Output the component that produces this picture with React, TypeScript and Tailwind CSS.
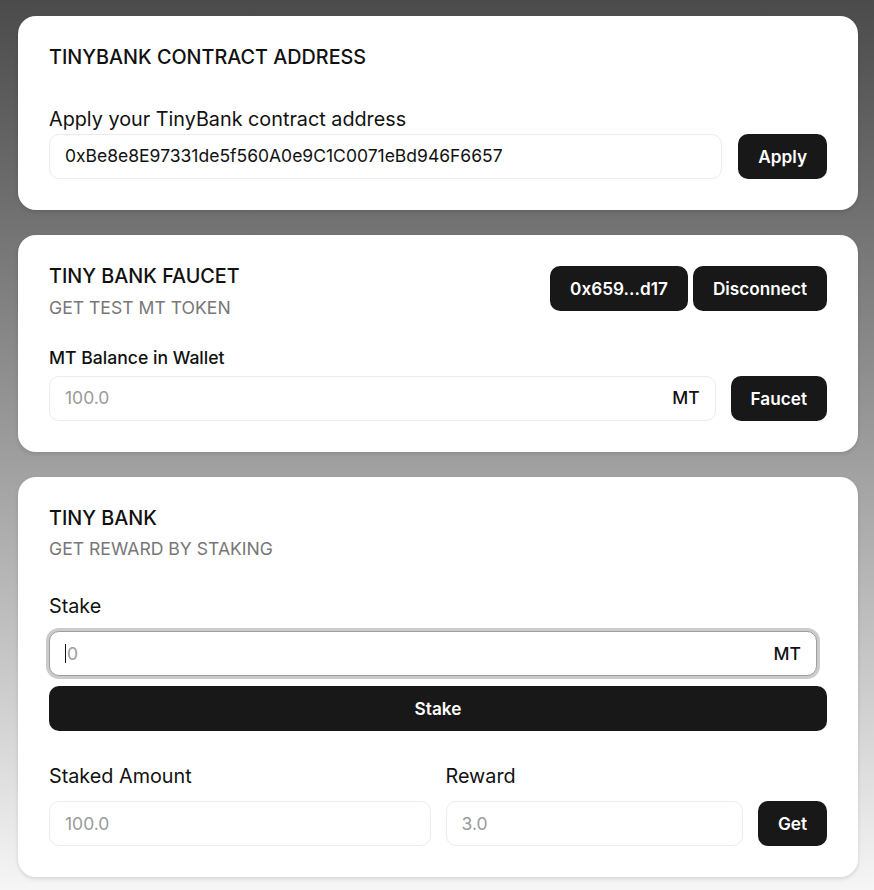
import React from "react";

function Btn({ children, className = "" }: { children: React.ReactNode; className?: string }) {
  return (
    <div
      className={
        "flex h-[45px] items-center justify-center rounded-[10px] bg-[#181818] px-5 pt-px text-[17.2px] font-semibold text-white " +
        className
      }
    >
      {children}
    </div>
  );
}

function Field({
  value,
  placeholder,
  suffix,
  className = "",
}: {
  value?: string;
  placeholder?: string;
  suffix?: string;
  className?: string;
}) {
  return (
    <div
      className={
        "flex h-[45px] items-center rounded-[10px] border border-[#ececec] bg-white px-[15px] text-[17.5px] " +
        className
      }
    >
      <span className={"flex-1 " + (value ? "text-[#111]" : "text-[#9a9a9a]")}>{value ?? placeholder}</span>
      {suffix && <span className="font-medium text-[#111]">{suffix}</span>}
    </div>
  );
}

const card = "rounded-[18px] bg-white px-[31px] pt-[32px] pb-[31px] shadow-[0_2px_4px_rgba(0,0,0,0.12)]";

export default function App() {
  return (
    <div
      className="flex min-h-[890px] flex-col gap-[25px] bg-gradient-to-b from-[#4b4b4b] to-[#f6f6f6] pt-4 pr-[16px] pb-3 pl-[18px]"
      style={{ fontFamily: "Inter, 'Noto Sans', sans-serif" }}
    >
      {/* Card 1 */}
      <div className={card}>
        <div className="text-[19.8px] leading-none font-medium text-[#111]">TINYBANK CONTRACT ADDRESS</div>
        <div className="mt-[37px] text-[19.8px] leading-7 text-[#111]">Apply your TinyBank contract address</div>
        <div className="mt-px flex gap-4">
          <Field value="0xBe8e8E97331de5f560A0e9C1C0071eBd946F6657" className="flex-1" />
          <Btn>Apply</Btn>
        </div>
      </div>

      {/* Card 2 */}
      <div className={card}>
        <div className="flex items-start justify-between">
          <div>
            <div className="text-[19.8px] leading-none font-medium text-[#111]">TINY BANK FAUCET</div>
            <div className="mt-[9px] text-[17.6px] leading-6 text-[#777]">GET TEST MT TOKEN</div>
          </div>
          <div className="-mt-px flex gap-[5px]">
            <Btn>0x659...d17</Btn>
            <Btn>Disconnect</Btn>
          </div>
        </div>
        <div className="mt-[26px] text-[17.6px] leading-6 font-medium text-[#111]">MT Balance in Wallet</div>
        <div className="mt-[6px] flex gap-[15px]">
          <Field placeholder="100.0" suffix="MT" className="flex-1" />
          <Btn className="pt-[3px]">Faucet</Btn>
        </div>
      </div>

      {/* Card 3 */}
      <div className={card}>
        <div className="text-[19.8px] leading-none font-medium text-[#111]">TINY BANK</div>
        <div className="mt-[9px] text-[17.6px] leading-6 text-[#777]">GET REWARD BY STAKING</div>
        <div className="mt-[31px] text-[19.8px] leading-7 text-[#111]">Stake</div>
        <div className="mt-[11px] mr-[10px] flex h-[45px] items-center rounded-[10px] border border-[#9e9e9e] bg-white px-[15px] text-[17.5px] ring-[3px] ring-[#cbcbcb]">
          <span className="flex flex-1 items-center text-[#9a9a9a]">
            <span className="mr-px inline-block h-[19px] w-px bg-[#111]" />0
          </span>
          <span className="font-medium text-[#111]">MT</span>
        </div>
        <Btn className="mt-[10px] w-full">Stake</Btn>
        <div className="mt-[31px] grid grid-cols-2 gap-[15px]">
          <div>
            <div className="text-[19.8px] leading-7 text-[#111]">Staked Amount</div>
            <Field placeholder="100.0" className="mt-[11px]" />
          </div>
          <div>
            <div className="text-[19.8px] leading-7 text-[#111]">Reward</div>
            <div className="mt-[11px] flex gap-[15px]">
              <Field placeholder="3.0" className="flex-1" />
              <Btn>Get</Btn>
            </div>
          </div>
        </div>
      </div>
    </div>
  );
}
